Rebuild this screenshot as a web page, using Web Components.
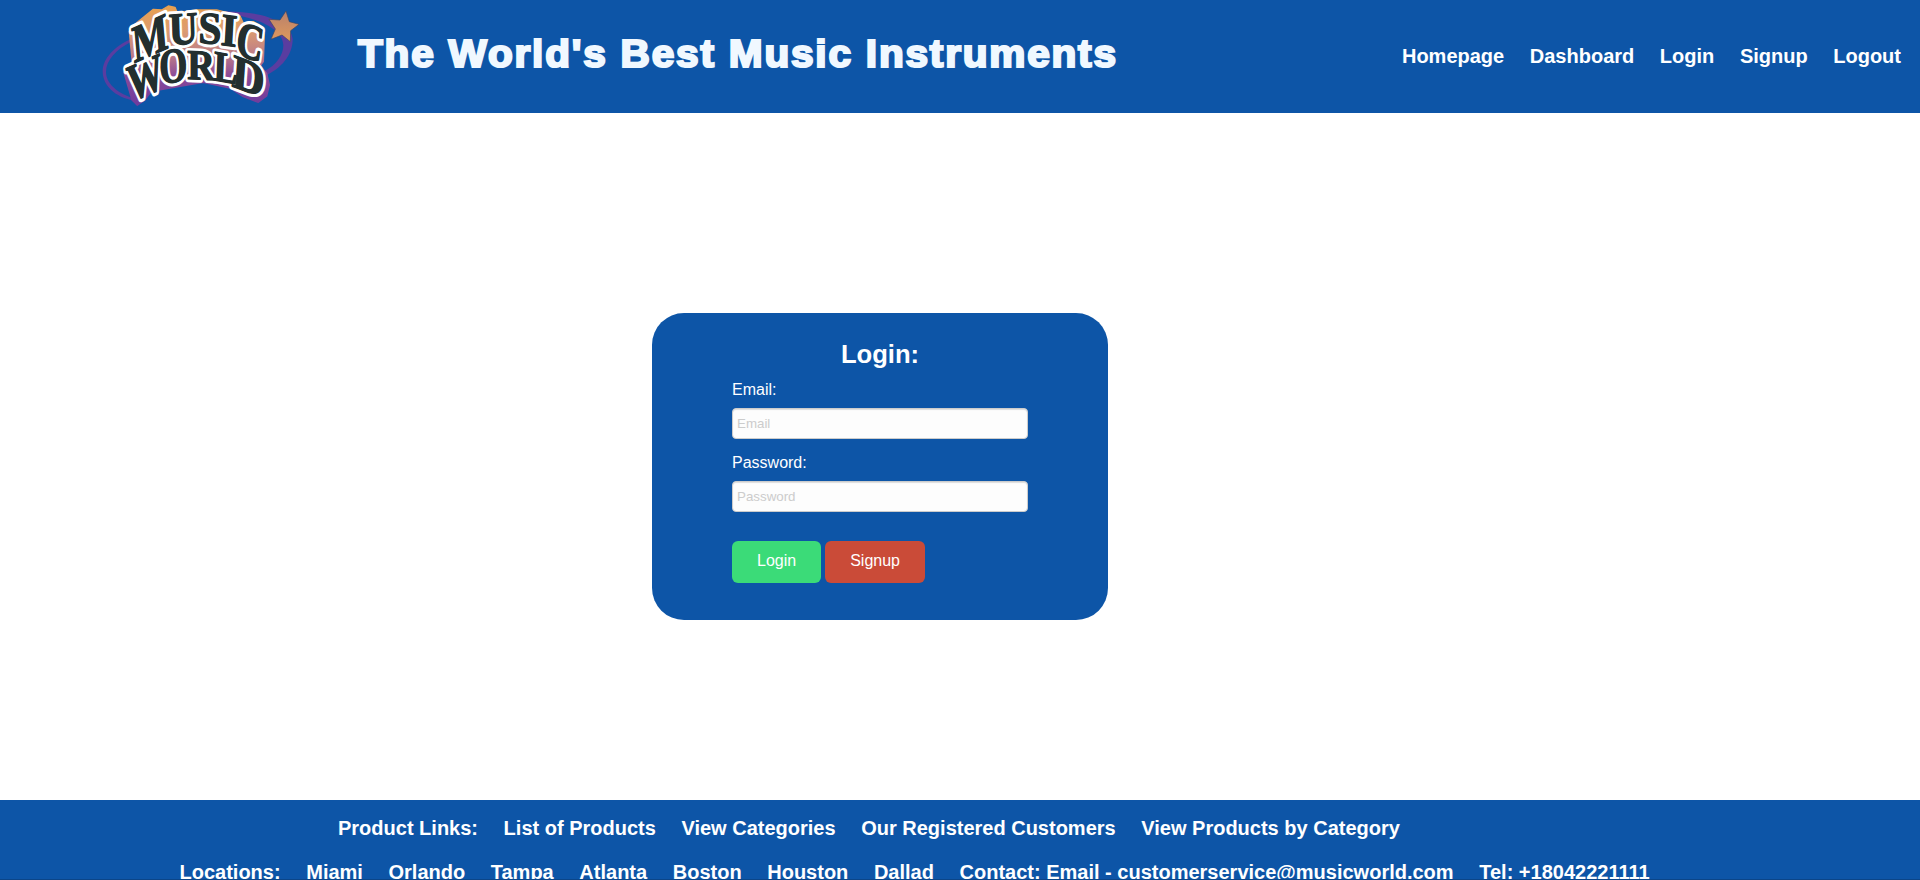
<!DOCTYPE html>
<html lang="en">
<head>
<meta charset="utf-8">
<title>Music World</title>
<style>
html,body{margin:0;height:100%;overflow:hidden}
body{background:#fff;font-family:"Liberation Sans",Arial,sans-serif;--brand:#0d55a7}
</style>
</head>
<body>
<mw-page>
  <mw-header slot="header">
    <mw-link>Homepage</mw-link><mw-link>Dashboard</mw-link><mw-link>Login</mw-link><mw-link>Signup</mw-link><mw-link>Logout</mw-link>
  </mw-header>
  <mw-login></mw-login>
  <mw-footer slot="footer"></mw-footer>
</mw-page>
<script>
function define(name, html){
  const t=document.createElement('template');
  t.innerHTML=html;
  customElements.define(name, class extends HTMLElement{
    constructor(){super();this.attachShadow({mode:'open'}).append(t.content.cloneNode(true));}
  });
}
define('mw-link',`<style>:host{display:block}a{color:inherit;text-decoration:none;font:bold 20px/23px "Liberation Sans",Arial,sans-serif;white-space:nowrap}</style><a href="#"><slot></slot></a>`);

define('mw-logo',`<style>:host{display:block;width:220px;height:113px}svg{display:block}
text{font:bold 100px "Liberation Serif","Times New Roman",serif;stroke-linejoin:round}</style>
<svg width="220" height="113" viewBox="0 0 660 339" aria-label="Music World">
<defs>
<linearGradient id="g" gradientUnits="userSpaceOnUse" x1="0" y1="20" x2="0" y2="310"><stop offset="0" stop-color="#e8a050"/><stop offset=".25" stop-color="#dc9c70"/><stop offset=".5" stop-color="#bd7c88"/><stop offset=".72" stop-color="#8a4a98"/><stop offset="1" stop-color="#703c9c"/></linearGradient>
<linearGradient id="s" x1="0" y1="0" x2="0" y2="1"><stop offset="0" stop-color="#b8806c"/><stop offset="1" stop-color="#e09a5c"/></linearGradient>
</defs>
<path d="M400 35C500 32 606 60 608 118C608 165 575 205 525 228L522 214C560 195 580 165 580 135C578 85 500 52 400 38Z" fill="#5a3da0"/>
<path d="M122 118C75 138 38 176 38 214C38 262 85 298 145 304L145 298C95 288 48 256 48 216C48 180 80 148 122 126Z" fill="#5a3da0"/>
<path d="M118 95L128 78L190 28L215 30L235 18L255 22L262 38L320 30L380 30L450 48L460 70L490 65L515 80L523 105L520 185L510 198L530 220L538 255L530 288L505 307L460 290L420 264L340 247L240 264L184 274L164 300L142 316L126 300L102 218L110 200L127 190Z" fill="url(#g)" stroke="url(#g)" stroke-width="4" stroke-linejoin="round"/>
<use href="#w" stroke="#fff" stroke-width="15"/>
<g id="w" fill="#232f2f">
<text transform="matrix(1.12 -.5 .14 1.56 132 190)">M</text>
<text transform="matrix(1.2 -.09 .04 1.38 238 136)">U</text>
<text transform="matrix(1.24 .06 -.02 1.36 325 129)">S</text>
<text transform="matrix(1.24 .17 -.08 1.38 391 134)">I</text>
<text transform="matrix(1.1 .36 -.2 1.5 434 162)">C</text>
<text transform="matrix(1.04 -.46 .25 1.52 122 306)">W</text>
<text transform="matrix(1.08 -.12 .05 1.48 209 251)">O</text>
<text transform="matrix(1.15 .05 0 1.28 292 237)">R</text>
<text transform="matrix(1.08 .2 -.05 1.3 370 240)">L</text>
<text transform="matrix(1.34 .5 -.1 1.42 424 258)">D</text>
</g>
<use href="#w" fill="none" stroke="#232f2f" stroke-width="2.5"/>
<path d="M588 33L598 65L627 73L602 92L601 125L576 105L543 118L556 87L537 58L570 60Z" fill="url(#s)" stroke="#3c4660" stroke-width="2"/>
</svg>`);

define('mw-header',`<style>:host{display:flex;height:113px;background:var(--brand);color:#fff;align-items:flex-start}
mw-logo{margin-left:90px;flex:none}
h1{margin:29px 0 0 48px;font:bold 38.5px/50px "Liberation Sans",Arial,sans-serif;letter-spacing:1.7px;color:#f0f8ff;-webkit-text-stroke:2.2px #f0f8ff;white-space:nowrap;transform:scaleX(1.054);transform-origin:0 0}
nav{margin:45px 19px 0 auto;display:flex;gap:25.6px}</style>
<mw-logo></mw-logo><h1>The World's Best Music Instruments</h1><nav><slot></slot></nav>`);

define('mw-login',`<style>:host{display:block;box-sizing:border-box;width:456px;height:307px;margin:200px 0 0 652px;padding:27px 80px 0;border-radius:32px;background:var(--brand);color:#fff}
h2{margin:0;font:bold 25.6px/29px "Liberation Sans",Arial,sans-serif;text-align:center}
label{display:block;font-size:16px;line-height:18px;margin:12px 0 9px}
input+label{margin-top:15px}
input{display:block;box-sizing:border-box;width:296px;height:31px;border:1px solid #ccc;border-radius:4px;padding:0 4px;background:#fdfdfd;box-shadow:inset 0 1px 1px #ddd;font:13.333px "Liberation Sans",Arial,sans-serif}
input::placeholder{color:#ccc;opacity:1}
div{display:flex;gap:4px;margin-top:29px}
button{border:0;border-radius:6px;height:42px;padding:0 25px 2px;background:#3bdb78;color:#fff;font:16px/18px "Liberation Sans",Arial,sans-serif}
button+button{background:#ca4b38}</style>
<h2>Login:</h2><label>Email:</label><input placeholder="Email"><label>Password:</label><input type="password" placeholder="Password"><div><button>Login</button><button>Signup</button></div>`);

define('mw-footer',`<style>:host{display:block;box-sizing:border-box;height:80px;overflow:hidden;background:var(--brand);color:#fff;border-bottom:1px solid #0b4588}
div{display:flex;gap:25.6px;padding:17px 0 0 338px}div+div{padding:21px 0 0 179.5px}</style>
<div><mw-link>Product Links:</mw-link><mw-link>List of Products</mw-link><mw-link>View Categories</mw-link><mw-link>Our Registered Customers</mw-link><mw-link>View Products by Category</mw-link></div>
<div><mw-link>Locations:</mw-link><mw-link>Miami</mw-link><mw-link>Orlando</mw-link><mw-link>Tampa</mw-link><mw-link>Atlanta</mw-link><mw-link>Boston</mw-link><mw-link>Houston</mw-link><mw-link>Dallad</mw-link><mw-link>Contact: Email - customerservice@musicworld.com</mw-link><mw-link>Tel: +18042221111</mw-link></div>`);

define('mw-page',`<style>:host{display:flex;flex-direction:column;height:880px;overflow:hidden}main{flex:1;display:flex;align-items:flex-start}</style><slot name="header"></slot><main><slot></slot></main><slot name="footer"></slot>`);
</script>
</body>
</html>
